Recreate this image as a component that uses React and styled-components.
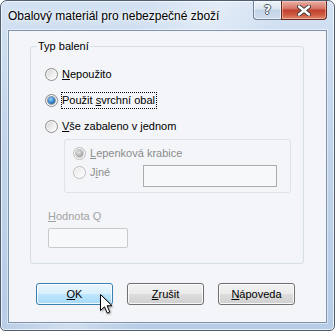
import React from "react";
import styled, { createGlobalStyle } from "styled-components";

const Global = createGlobalStyle`
  html, body { margin: 0; padding: 0; background: #ffffff; }
  body { font-family: "Liberation Sans", Arial, sans-serif; font-size: 11px; color: #000; }
  * { box-sizing: border-box; }
`;

const Window = styled.div`
  position: relative;
  width: 335px;
  height: 331px;
  display: flex;
  flex-direction: column;
  border: 1px solid #4f5d70;
  border-radius: 7px 7px 5px 5px;
  background:
    linear-gradient(115deg, rgba(255,255,255,0) 30%, rgba(255,255,255,0.35) 45%, rgba(255,255,255,0) 60%),
    linear-gradient(180deg, #d3e2f3 0%, #c2d5ec 40%, #b7cce6 100%);
  box-shadow: inset 0 0 0 1px rgba(255,255,255,0.7);
  overflow: hidden;
`;

const TitleBar = styled.div`
  height: 29px;
  display: flex;
  align-items: flex-start;
  flex: none;
`;

const Title = styled.div`
  margin: 7px 0 0 7px;
  font-size: 12px;
  line-height: 16px;
  color: #000;
  white-space: nowrap;
  text-shadow: 0 0 6px rgba(255,255,255,0.95), 0 0 3px rgba(255,255,255,0.9);
`;

const CaptionButtons = styled.div`
  margin-left: auto;
  margin-right: 7px;
  display: flex;
`;

const HelpButton = styled.div`
  width: 28px;
  height: 19px;
  border: 1px solid #6f8198;
  border-top: none;
  border-right: none;
  border-radius: 0 0 0 4px;
  background: linear-gradient(180deg, #eef3f9 0%, #dbe5f1 45%, #c3d3e6 50%, #cfdced 100%);
  box-shadow: inset 0 0 0 1px rgba(255,255,255,0.6);
  display: flex;
  align-items: center;
  justify-content: center;
  font-family: "DejaVu Sans", sans-serif;
  font-weight: bold;
  font-size: 12px;
  color: #fff;
  text-shadow: 1px 0 0 #4a5568, -1px 0 0 #4a5568, 0 1px 0 #4a5568, 0 -1px 0 #4a5568;
`;

const CloseButton = styled.div`
  width: 46px;
  height: 19px;
  border: 1px solid #6a2a22;
  border-top: none;
  border-radius: 0 0 4px 0;
  background: linear-gradient(180deg, #eab1a4 0%, #d7796a 40%, #c3412f 52%, #cf5f45 80%, #e08b6c 100%);
  box-shadow: inset 0 0 0 1px rgba(255,220,210,0.45);
  display: flex;
  align-items: center;
  justify-content: center;
`;

const Client = styled.div`
  flex: 1;
  margin: 0 7px 7px 7px;
  border: 1px solid #7f93ad;
  background: #f3f5f8;
  display: flex;
  flex-direction: column;
  box-shadow: 0 0 0 1px rgba(255,255,255,0.45);
`;

const GroupBox = styled.div`
  position: relative;
  margin: 15px 0 0 21px;
  width: 274px;
  height: 218px;
  border: 1px solid #d5dfe5;
  border-radius: 3px;
  padding: 19px 0 0 14px;
  display: flex;
  flex-direction: column;
  align-items: flex-start;
`;

const GroupCaption = styled.span`
  position: absolute;
  top: -8px;
  left: 6px;
  padding: 0 1px;
  line-height: 14px;
  background: #f3f5f8;
  color: ${(p) => (p.$disabled ? "#9a9a9a" : "#000")};
`;

const Option = styled.div`
  display: flex;
  align-items: center;
  gap: 4px;
  height: 16px;
  margin-top: ${(p) => p.$mt || 0}px;
  flex: ${(p) => (p.$w ? `0 0 ${p.$w}px` : "none")};
  color: ${(p) => (p.$disabled ? "#8c8c8c" : "#000")};
`;

const Radio = styled.span`
  position: relative;
  flex: none;
  width: 13px;
  height: 13px;
  border-radius: 50%;
  border: 1px solid ${(p) => (p.$disabled ? "#bcbcbc" : "#8b8b8b")};
  background: ${(p) =>
    p.$disabled
      ? "linear-gradient(135deg, #e6e6e6 0%, #f6f6f6 60%, #fbfbfb 100%)"
      : "linear-gradient(135deg, #cfcfcf 0%, #ececec 50%, #ffffff 100%)"};
  box-shadow: inset 0 0 0 1px rgba(255,255,255,0.75);
  &::after {
    content: "";
    position: absolute;
    top: 2px;
    left: 2px;
    width: 7px;
    height: 7px;
    border-radius: 50%;
    display: ${(p) => (p.$checked ? "block" : "none")};
    background: ${(p) =>
      p.$disabled
        ? "radial-gradient(circle at 40% 35%, #e8e8e8 0%, #b4b4b4 50%, #8e8e8e 100%)"
        : "radial-gradient(circle at 40% 35%, #9fdcff 0%, #3a8bd0 45%, #0d3b69 100%)"};
    box-shadow: 0 0 0 1px ${(p) => (p.$disabled ? "rgba(150,150,150,0.5)" : "rgba(20,60,100,0.45)")};
  }
`;

const OptionText = styled.span`
  line-height: 15px;
  white-space: nowrap;
  ${(p) =>
    p.$focused &&
    `
    border: 1px dotted #000;
    margin-left: -1px;
    padding: 0 1px 0 0;
  `}
`;

const Mn = styled.span`
  text-decoration: underline;
  text-underline-offset: 1px;
`;

const SubGroup = styled.div`
  margin: 5px 0 0 19px;
  width: 227px;
  height: 54px;
  border: 1px solid #dde3e8;
  border-radius: 3px;
  padding: 5px 0 0 8px;
  display: flex;
  flex-direction: column;
`;

const FieldRow = styled.div`
  display: flex;
  align-items: flex-start;
  margin-top: 3px;
`;

const TextBox = styled.div`
  width: ${(p) => p.$w}px;
  height: ${(p) => p.$h}px;
  margin-top: ${(p) => p.$mt || 0}px;
  border: 1px solid ${(p) => p.$border || "#acacac"};
  border-radius: ${(p) => p.$r || 0}px;
  background: #f7f8fa;
`;

const FieldLabel = styled.div`
  margin: 15px 0 0 3px;
  line-height: 16px;
  color: #a3a3a3;
`;

const ButtonRow = styled.div`
  display: flex;
  gap: 14px;
  margin: 19px 0 0 27px;
`;

const Button = styled.div`
  width: 77px;
  height: 22px;
  border-radius: 3px;
  border: 1px solid ${(p) => (p.$default ? "#3c7fb1" : "#707070")};
  background: ${(p) =>
    p.$default
      ? "linear-gradient(180deg, #eaf6fd 0%, #d9f0fc 48%, #bee6fd 52%, #a7d9f5 100%)"
      : "linear-gradient(180deg, #f2f2f2 0%, #ebebeb 48%, #dddddd 52%, #cfcfcf 100%)"};
  box-shadow: inset 0 0 0 1px rgba(255,255,255,0.8);
  display: flex;
  align-items: center;
  justify-content: center;
  line-height: 14px;
  color: #000;
`;

const Cursor = styled.svg`
  position: absolute;
  left: 99px;
  top: 293px;
  filter: drop-shadow(1px 1px 1px rgba(0,0,0,0.35));
`;

export default function App() {
  return (
    <>
      <Global />
      <Window>
        <TitleBar>
          <Title>Obalový materiál pro nebezpečné zboží</Title>
          <CaptionButtons>
            <HelpButton>?</HelpButton>
            <CloseButton>
              <svg width="14" height="11" viewBox="0 0 14 11">
                <path d="M2 1.5 L12 9.5 M12 1.5 L2 9.5" stroke="#3b3b3b" strokeWidth="4.2" strokeLinecap="round" />
                <path d="M2 1.5 L12 9.5 M12 1.5 L2 9.5" stroke="#ffffff" strokeWidth="2.4" strokeLinecap="round" />
              </svg>
            </CloseButton>
          </CaptionButtons>
        </TitleBar>
        <Client>
          <GroupBox>
            <GroupCaption>Typ balení</GroupCaption>
            <Option>
              <Radio />
              <OptionText>
                <Mn>N</Mn>epoužito
              </OptionText>
            </Option>
            <Option $mt={10}>
              <Radio $checked />
              <OptionText $focused>
                Použit <Mn>s</Mn>vrchní obal
              </OptionText>
            </Option>
            <Option $mt={10}>
              <Radio />
              <OptionText>
                <Mn>V</Mn>še zabaleno v jednom
              </OptionText>
            </Option>
            <SubGroup>
              <Option $disabled>
                <Radio $checked $disabled />
                <OptionText>
                  <Mn>L</Mn>epenková krabice
                </OptionText>
              </Option>
              <FieldRow>
                <Option $disabled $w={70}>
                  <Radio $disabled />
                  <OptionText>
                    J<Mn>i</Mn>né
                  </OptionText>
                </Option>
                <TextBox $w={134} $h={22} $mt={1} />
              </FieldRow>
            </SubGroup>
            <FieldLabel>
              <Mn>H</Mn>odnota Q
            </FieldLabel>
            <TextBox $w={80} $h={20} $mt={4} $border="#c7cbd0" $r={2} style={{ marginLeft: 3 }} />
          </GroupBox>
          <ButtonRow>
            <Button $default>
              <Mn>O</Mn>K
            </Button>
            <Button>
              <Mn>Z</Mn>rušit
            </Button>
            <Button>
              <Mn>N</Mn>ápoveda
            </Button>
          </ButtonRow>
        </Client>
        <Cursor width="14" height="21" viewBox="0 0 14 21">
          <path
            d="M0.5 0.5 L0.5 16.5 L4.5 12.8 L7.3 19.2 L9.8 18.1 L7.1 11.8 L12 11.8 Z"
            fill="#ffffff"
            stroke="#000000"
            strokeWidth="1"
            strokeLinejoin="miter"
          />
        </Cursor>
      </Window>
    </>
  );
}
